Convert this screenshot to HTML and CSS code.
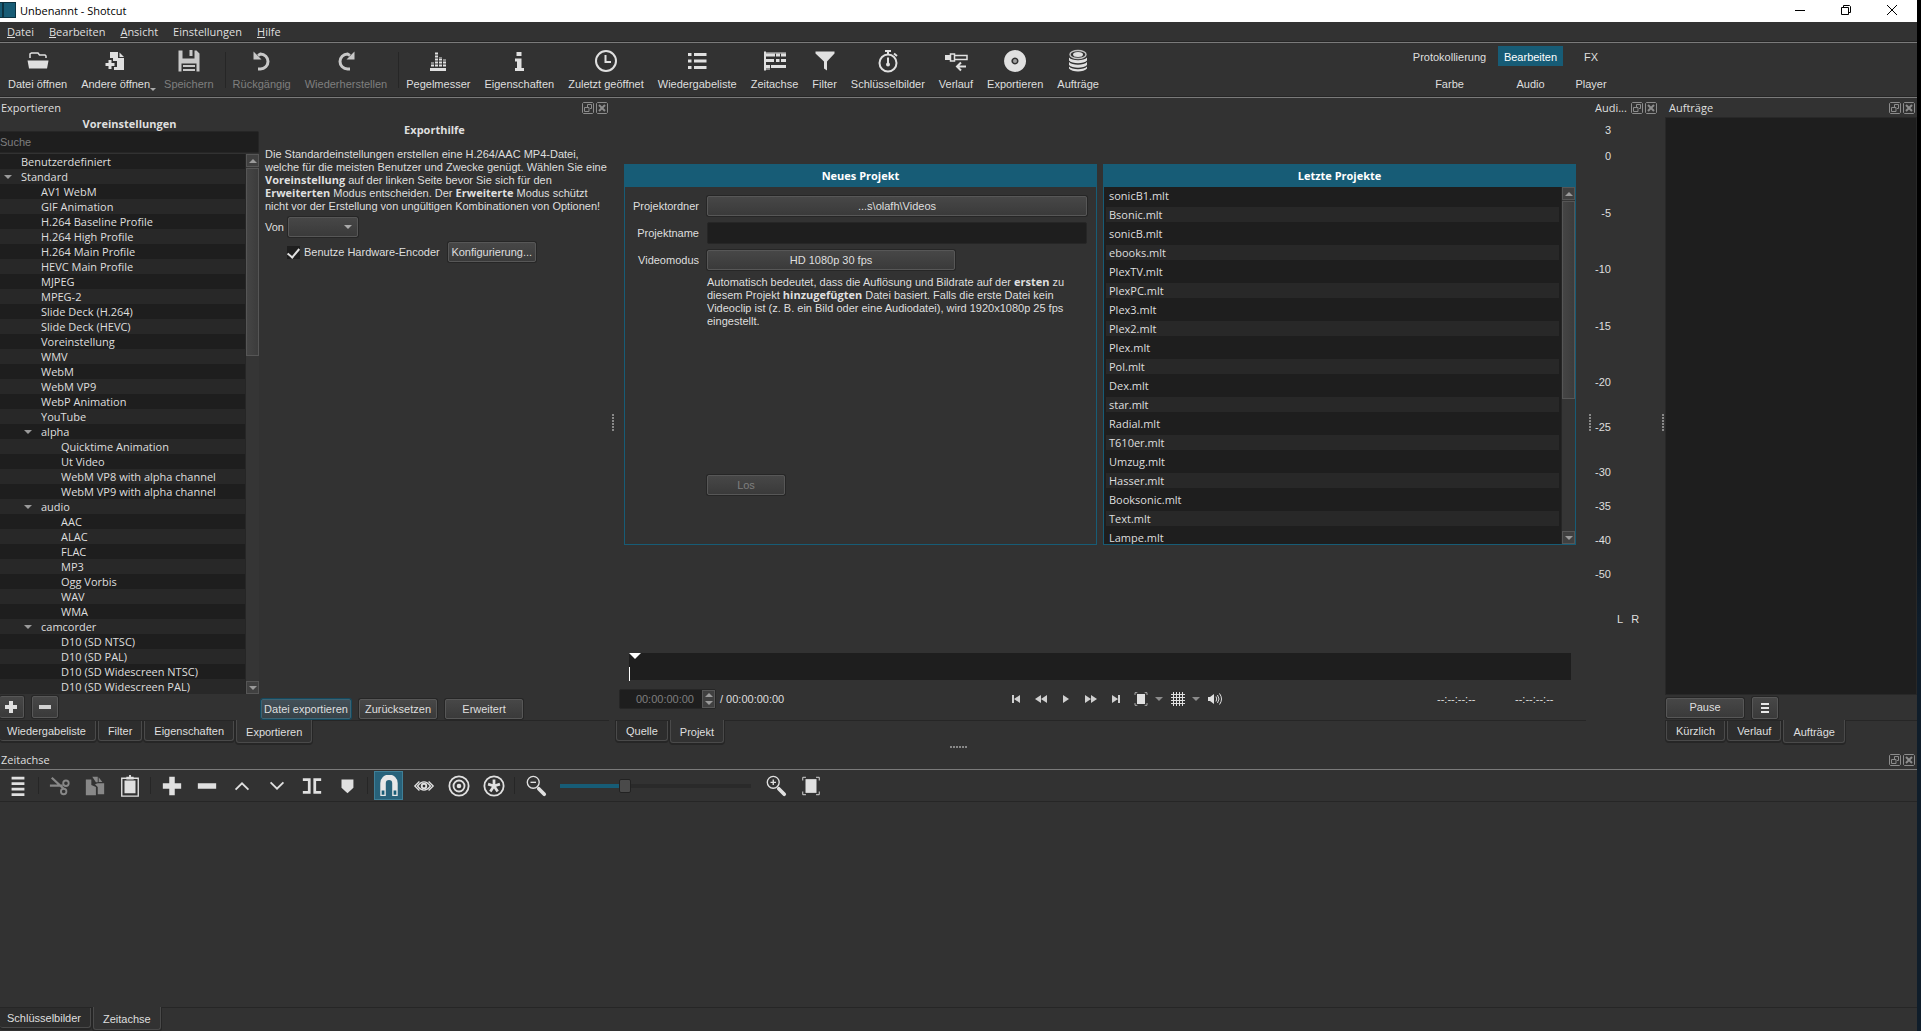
FILE: index.html
```html
<!DOCTYPE html>
<html lang="de">
<head>
  <meta charset="UTF-8" />
  <meta name="viewport" content="width=device-width, initial-scale=1.0"/>
  <title>Unbenannt - Shotcut</title>
  <link rel="stylesheet" href="styles.css">
</head>
<body>
  <!-- shared dock buttons -->
  <svg class="defs" width="0" height="0" aria-hidden="true">
    <symbol id="i-float" viewBox="0 0 12 12">
      <path d="M1.5 .5h9l1 1v9l-1 1h-9l-1-1v-9z M5.5 5V2.500h4v4H8 M2.500 5.500h4.500v4H2.500z" fill="none" stroke="#8c8c8c"/>
    </symbol>
    <symbol id="i-close" viewBox="0 0 12 12">
      <path d="M1.500 .5h9l1 1v9l-1 1h-9l-1-1v-9z" fill="none" stroke="#8c8c8c"/>
      <path d="M3 3l6 6M9 3l-6 6" stroke="#8c8c8c" stroke-width="2"/>
    </symbol>
    <symbol id="i-fit" viewBox="0 0 24 24">
      <path d="M6 4.500h12v15H6z" fill="#e0e0e0"/>
      <path d="M3 6V2.500h3.500M17.500 2.500H21V6M21 18v3.500h-3.500M6.500 21.500H3V18" fill="none" stroke="#e0e0e0"/>
    </symbol>
  </svg>

  <div class="window">
    <header class="titlebar">
      <svg class="logo" width="16" height="16" viewBox="0 0 16 16"><path d="M0 0h16v16H0z" fill="#0c3342"/><path d="M0 1h2v14H0zM4 1h11v14H4z" fill="#175c76"/></svg>
      <span class="title">Unbenannt - Shotcut</span>
      <div class="window-buttons">
        <button aria-label="Minimieren"><svg width="12" height="12" viewBox="0 0 12 12"><path d="M1 6.500h10" stroke="#000"/></svg></button>
        <button aria-label="Verkleinern"><svg width="12" height="12" viewBox="0 0 12 12"><path d="M1.500 3.500h7v7h-7zM3.500 3V1.500h6l1 1v6H9" fill="none" stroke="#000"/></svg></button>
        <button aria-label="Schließen"><svg width="12" height="12" viewBox="0 0 12 12"><path d="M1 1l10 10M11 1L1 11" stroke="#000"/></svg></button>
      </div>
    </header>

    <nav class="menubar">
      <a href="#datei"><u>D</u>atei</a>
      <a href="#bearbeiten"><u>B</u>earbeiten</a>
      <a href="#ansicht"><u>A</u>nsicht</a>
      <a href="#einstellungen">Einstellungen</a>
      <a href="#hilfe"><u>H</u>ilfe</a>
    </nav>

    <div class="toolbar">
      <button class="tool">
        <svg viewBox="0 0 24 24"><path d="M4 9V5l1.500-1H12l1.500 2H19l1 1v2" fill="none" stroke="#e0e0e0" stroke-width="1.500"/><path d="M1.500 11.500h21l-1.500 8H3z" fill="#e0e0e0"/></svg>
        Datei öffnen
      </button>
      <button class="tool has-menu">
        <svg viewBox="0 0 24 24"><path d="M6 3h8v6h6v12H10v-3h3v-6H9V9H6z" fill="#e0e0e0"/><path d="M15.500 3.500L20 8h-4.500z" fill="#e0e0e0"/><path d="M6 11v9M1.500 15.500h9" stroke="#e0e0e0" stroke-width="3"/></svg>
        Andere öffnen
      </button>
      <button class="tool" disabled>
        <svg viewBox="0 0 24 24"><path d="M1.500 1.500h4v8h12v-8h2l3 3v18h-3v-8h-15v8h-3z" fill="#c8c8c8"/><path d="M12.500 1h3v6h-3zM6 16h12v2H6zM6 20h12v2H6z" fill="#c8c8c8"/></svg>
        Speichern
      </button>
      <span class="sep"></span>
      <button class="tool" disabled>
        <svg viewBox="0 0 24 24"><path d="M8 20h2.500a7.500 7.500 0 0 0 0-15L8 6.500" fill="none" stroke="#c8c8c8" stroke-width="3"/><path d="M3.500 2.500v8h8z" fill="#c8c8c8"/></svg>
        Rückgängig
      </button>
      <button class="tool" disabled>
        <svg viewBox="0 0 24 24"><path d="M16 20h-2.500a7.500 7.500 0 0 1 0-15l2.500 1.500" fill="none" stroke="#c8c8c8" stroke-width="3"/><path d="M20.500 2.500v8h-8z" fill="#c8c8c8"/></svg>
        Wiederherstellen
      </button>
      <span class="sep"></span>
      <button class="tool">
        <svg viewBox="0 0 24 24"><path d="M4 19h16v3H4z" fill="#e0e0e0"/><path d="M6.500 17.500v-4M10.500 17.500V3M14.500 17.500V8M18.500 17.500v-7" stroke="#e0e0e0" stroke-width="3" stroke-dasharray="2 1"/></svg>
        Pegelmesser
      </button>
      <button class="tool">
        <svg viewBox="0 0 24 24"><path d="M9.500 3h5v4h-5zM8 9.500h6.500V19H17v3H8v-3h2v-6.500H8z" fill="#e0e0e0"/></svg>
        Eigenschaften
      </button>
      <button class="tool">
        <svg viewBox="0 0 24 24"><circle cx="12" cy="12" r="10" fill="none" stroke="#e0e0e0" stroke-width="2"/><path d="M11.500 6v7H17" fill="none" stroke="#e0e0e0" stroke-width="2"/></svg>
        Zuletzt geöffnet
      </button>
      <button class="tool">
        <svg viewBox="0 0 24 24"><path d="M3 5.500h3.500M9 5.500h12.500M3 12h3.500M9 12h12.500M3 18.500h3.500M9 18.500h12.500" stroke="#e0e0e0" stroke-width="3"/></svg>
        Wiedergabeliste
      </button>
      <button class="tool">
        <svg viewBox="0 0 24 24"><path d="M2 2.500v19" stroke="#e0e0e0" stroke-width="2"/><path d="M3 6h9M13 6h4M18 6h5M3 11.500h8M13 11.500h3.500M18 11.500h5M3 17.500h4M8 17.500h15" stroke="#e0e0e0" stroke-width="3"/><path d="M3 4h20M3 20h4" stroke="#e0e0e0"/></svg>
        Zeitachse
      </button>
      <button class="tool">
        <svg viewBox="0 0 24 24"><path d="M2.500 2.500h19v2l-7.500 8v9l-3-2v-7l-8.500-8z" fill="#e0e0e0"/></svg>
        Filter
      </button>
      <button class="tool">
        <svg viewBox="0 0 24 24"><circle cx="12" cy="14" r="8.500" fill="none" stroke="#e0e0e0" stroke-width="2"/><path d="M12 1v4M9 2h6M18 4.500l3 2.500" stroke="#e0e0e0" stroke-width="2"/><path d="M12 8.500v7" stroke="#e0e0e0" stroke-width="2"/><circle cx="12" cy="15.500" r="2" fill="#e0e0e0"/></svg>
        Schlüsselbilder
      </button>
      <button class="tool">
        <svg viewBox="0 0 24 24"><path d="M1 6h5v5H1z" fill="#e0e0e0"/><path d="M6.500 5h4v7h-4zM10.500 6.500H23v4H10.500z" fill="none" stroke="#e0e0e0" stroke-width="1.500"/><path d="M22 17.500h-8M17 13.500l-4 4 4 4" fill="none" stroke="#e0e0e0" stroke-width="2"/></svg>
        Verlauf
      </button>
      <button class="tool">
        <svg viewBox="0 0 24 24"><path d="M12 1a11 11 0 1 0 .1 0zM12 8.500a3.500 3.500 0 1 1-.1 0z" fill="#e0e0e0" fill-rule="evenodd"/><circle cx="12" cy="12" r="2" fill="#a0a0a0"/></svg>
        Exportieren
      </button>
      <button class="tool">
        <svg viewBox="0 0 24 24"><ellipse cx="12" cy="5.500" rx="8" ry="4" fill="none" stroke="#c0c0c0" stroke-width="1.500"/><ellipse cx="12" cy="5.500" rx="5" ry="2.500" fill="#e0e0e0"/><path d="M3 8.500c3 3.500 15 3.500 18 0v3c-3 3.500-15 3.500-18 0zM3 13c3 3.500 15 3.500 18 0v3c-3 3.500-15 3.500-18 0zM3 17.500c3 3.500 15 3.500 18 0v2c-3 4-15 4-18 0z" fill="#e0e0e0"/></svg>
        Aufträge
      </button>
      <div class="layouts">
        <button>Protokollierung</button>
        <button class="active">Bearbeiten</button>
        <button>FX</button>
        <button>Farbe</button>
        <button>Audio</button>
        <button>Player</button>
      </div>
    </div>

    <main class="docks">
      <section class="dock export-dock">
        <div class="dock-title">
          <span>Exportieren</span>
          <button aria-label="Abdocken"><svg><use href="#i-float"/></svg></button>
          <button aria-label="Schließen"><svg><use href="#i-close"/></svg></button>
        </div>
        <div class="export-body">
          <div class="presets">
            <h2>Voreinstellungen</h2>
            <input class="search" type="text" placeholder="Suche" aria-label="Suche">
            <div class="tree-wrap">
              <ul class="tree">
                <li>Benutzerdefiniert</li>
                <li class="open">Standard</li>
                <li class="l1">AV1 WebM</li>
                <li class="l1">GIF Animation</li>
                <li class="l1">H.264 Baseline Profile</li>
                <li class="l1">H.264 High Profile</li>
                <li class="l1">H.264 Main Profile</li>
                <li class="l1">HEVC Main Profile</li>
                <li class="l1">MJPEG</li>
                <li class="l1">MPEG-2</li>
                <li class="l1">Slide Deck (H.264)</li>
                <li class="l1">Slide Deck (HEVC)</li>
                <li class="l1">Voreinstellung</li>
                <li class="l1">WMV</li>
                <li class="l1">WebM</li>
                <li class="l1">WebM VP9</li>
                <li class="l1">WebP Animation</li>
                <li class="l1">YouTube</li>
                <li class="l1 open">alpha</li>
                <li class="l2">Quicktime Animation</li>
                <li class="l2">Ut Video</li>
                <li class="l2">WebM VP8 with alpha channel</li>
                <li class="l2">WebM VP9 with alpha channel</li>
                <li class="l1 open">audio</li>
                <li class="l2">AAC</li>
                <li class="l2">ALAC</li>
                <li class="l2">FLAC</li>
                <li class="l2">MP3</li>
                <li class="l2">Ogg Vorbis</li>
                <li class="l2">WAV</li>
                <li class="l2">WMA</li>
                <li class="l1 open">camcorder</li>
                <li class="l2">D10 (SD NTSC)</li>
                <li class="l2">D10 (SD PAL)</li>
                <li class="l2">D10 (SD Widescreen NTSC)</li>
                <li class="l2">D10 (SD Widescreen PAL)</li>
              </ul>
              <div class="scrollbar"><i class="up"></i><b></b><i class="down"></i></div>
            </div>
            <div class="preset-buttons">
              <button class="btn" aria-label="Hinzufügen"><svg width="12" height="12" viewBox="0 0 12 12"><path d="M6 0v12M0 6h12" stroke="#e0e0e0" stroke-width="4"/></svg></button>
              <button class="btn" aria-label="Entfernen"><svg width="12" height="12" viewBox="0 0 12 12"><path d="M0 6h12" stroke="#d0d0d0" stroke-width="4"/></svg></button>
            </div>
          </div>
          <div class="export-help">
            <h2>Exporthilfe</h2>
            <p>Die Standardeinstellungen erstellen eine H.264/AAC MP4-Datei,<br>
              welche für die meisten Benutzer und Zwecke genügt. Wählen Sie eine<br>
              <strong>Voreinstellung</strong> auf der linken Seite bevor Sie sich für den<br>
              <strong>Erweiterten</strong> Modus entscheiden. Der <strong>Erweiterte</strong> Modus schützt<br>
              nicht vor der Erstellung von ungültigen Kombinationen von Optionen!</p>
            <div class="from-row">
              <label for="from">Von</label>
              <span class="select-box"><select id="from"><option></option></select></span>
            </div>
            <div class="encoder-row">
              <input type="checkbox" id="hw" checked>
              <label for="hw">Benutze Hardware-Encoder</label>
              <button class="btn">Konfigurierung...</button>
            </div>
            <div class="export-buttons">
              <button class="btn primary">Datei exportieren</button>
              <button class="btn">Zurücksetzen</button>
              <button class="btn">Erweitert</button>
            </div>
          </div>
        </div>
        <div class="tabs flush">
          <button>Wiedergabeliste</button>
          <button>Filter</button>
          <button>Eigenschaften</button>
          <button class="active">Exportieren</button>
        </div>
      </section>

      <span class="splitter"></span>

      <section class="player">
        <div class="projects">
          <form class="card new-project">
            <h2>Neues Projekt</h2>
            <div class="form-grid">
              <label for="folder">Projektordner</label>
              <button type="button" class="btn" id="folder">...s\olafh\Videos</button>
              <label for="name">Projektname</label>
              <input type="text" id="name">
              <label for="mode">Videomodus</label>
              <button type="button" class="btn mode" id="mode">HD 1080p 30 fps</button>
              <p>Automatisch bedeutet, dass die Auflösung und Bildrate auf der <strong>ersten</strong> zu<br>
                diesem Projekt <strong>hinzugefügten</strong> Datei basiert. Falls die erste Datei kein<br>
                Videoclip ist (z. B. ein Bild oder eine Audiodatei), wird 1920x1080p 25 fps<br>
                eingestellt.</p>
              <button class="btn go" disabled>Los</button>
            </div>
          </form>
          <div class="card recent">
            <h2>Letzte Projekte</h2>
            <div class="recent-body">
              <ul>
                <li>sonicB1.mlt</li>
                <li>Bsonic.mlt</li>
                <li>sonicB.mlt</li>
                <li>ebooks.mlt</li>
                <li>PlexTV.mlt</li>
                <li>PlexPC.mlt</li>
                <li>Plex3.mlt</li>
                <li>Plex2.mlt</li>
                <li>Plex.mlt</li>
                <li>Pol.mlt</li>
                <li>Dex.mlt</li>
                <li>star.mlt</li>
                <li>Radial.mlt</li>
                <li>T610er.mlt</li>
                <li>Umzug.mlt</li>
                <li>Hasser.mlt</li>
                <li>Booksonic.mlt</li>
                <li>Text.mlt</li>
                <li>Lampe.mlt</li>
              </ul>
              <div class="scrollbar"><i class="up"></i><b></b><i class="down"></i></div>
            </div>
          </div>
        </div>

        <div class="scrub">
          <svg width="13" height="28" viewBox="0 0 13 28"><path d="M0 0h12L6 6z" fill="#fff"/><path d="M.5 14v14" stroke="#fff"/></svg>
        </div>

        <div class="controls">
          <div class="spinbox">
            <input type="text" value="00:00:00:00" aria-label="Position" disabled>
            <span><i class="up"></i><i class="down"></i></span>
          </div>
          <span class="duration">/ 00:00:00:00</span>
          <div class="transport">
            <button aria-label="Zum Anfang"><svg width="16" height="16" viewBox="0 0 16 16"><path d="M4 4h2v8H4zM12 4v8L6 8z" fill="#d0d0d0"/></svg></button>
            <button aria-label="Zurückspulen"><svg width="16" height="16" viewBox="0 0 16 16"><path d="M8 4v8L2 8zM14 4v8L8 8z" fill="#d0d0d0"/></svg></button>
            <button aria-label="Abspielen"><svg width="16" height="16" viewBox="0 0 16 16"><path d="M5 4v8l6-4z" fill="#d0d0d0"/></svg></button>
            <button aria-label="Vorspulen"><svg width="16" height="16" viewBox="0 0 16 16"><path d="M2 4v8l6-4zM8 4v8l6-4z" fill="#d0d0d0"/></svg></button>
            <button aria-label="Zum Ende"><svg width="16" height="16" viewBox="0 0 16 16"><path d="M4 4v8l6-4zM10 4h2v8h-2z" fill="#d0d0d0"/></svg></button>
            <button class="menu-arrow" aria-label="Zoom"><svg width="16" height="16"><use href="#i-fit"/></svg></button>
            <button class="menu-arrow" aria-label="Raster"><svg width="16" height="16" viewBox="0 0 16 16"><path d="M1 3.500h14M1 6.500h14M1 9.500h14M1 12.500h14M3.500 1v14M6.500 1v14M9.500 1v14M12.500 1v14" stroke="#e0e0e0"/></svg></button>
            <button aria-label="Lautstärke"><svg width="16" height="16" viewBox="0 0 16 16"><path d="M1 6h2v4H1zM3 6l4-3v10l-4-3z" fill="#e0e0e0"/><path d="M9 5.500q1.500 2.500 0 5M10.500 4q3 4 0 8M12.500 2.500q4 5.500 0 11" fill="none" stroke="#e0e0e0"/></svg></button>
          </div>
          <span class="timecode">--:--:--:--</span>
          <span class="timecode">--:--:--:--</span>
        </div>
        <div class="tabs">
          <button>Quelle</button>
          <button class="active">Projekt</button>
        </div>
      </section>

      <span class="splitter"></span>

      <section class="dock audio-dock">
        <div class="dock-title">
          <span>Audi...</span>
          <button aria-label="Abdocken"><svg><use href="#i-float"/></svg></button>
          <button aria-label="Schließen"><svg><use href="#i-close"/></svg></button>
        </div>
        <ol class="scale">
          <li class="first">3</li>
          <li>0</li>
          <li>-5</li>
          <li>-10</li>
          <li>-15</li>
          <li class="mid">-20</li>
          <li class="mid">-25</li>
          <li class="low">-30</li>
          <li class="low">-35</li>
          <li class="low">-40</li>
          <li class="mid">-50</li>
        </ol>
        <div class="channels"><span>L</span><span>R</span></div>
      </section>

      <span class="splitter"></span>

      <section class="dock jobs-dock">
        <div class="dock-title">
          <span>Aufträge</span>
          <button aria-label="Abdocken"><svg><use href="#i-float"/></svg></button>
          <button aria-label="Schließen"><svg><use href="#i-close"/></svg></button>
        </div>
        <div class="jobs"></div>
        <div class="job-buttons">
          <button class="btn">Pause</button>
          <button class="btn square" aria-label="Menü"><svg width="8" height="10" viewBox="0 0 8 10"><path d="M0 1h8M0 5h8M0 9h8" stroke="#e8e8e8" stroke-width="2"/></svg></button>
        </div>
        <div class="tabs">
          <button>Kürzlich</button>
          <button>Verlauf</button>
          <button class="active">Aufträge</button>
        </div>
      </section>
    </main>

    <span class="splitter horizontal"></span>

    <section class="timeline">
      <div class="dock-title">
        <span>Zeitachse</span>
        <button aria-label="Abdocken"><svg><use href="#i-float"/></svg></button>
        <button aria-label="Schließen"><svg><use href="#i-close"/></svg></button>
      </div>
      <div class="timeline-tools">
        <button aria-label="Menü"><svg viewBox="0 0 24 24"><path d="M5 3.500h14M5 9.500h14M5 15.500h14M5 21.500h14" stroke="#e0e0e0" stroke-width="3"/></svg></button>
        <span class="sep"></span>
        <button aria-label="Ausschneiden" disabled><svg viewBox="0 0 24 24"><path d="M3 3l13 12M1 11.500h14" stroke="#888" stroke-width="2.500"/><circle cx="18.500" cy="9" r="3" fill="none" stroke="#888" stroke-width="2"/><circle cx="16" cy="18" r="3" fill="none" stroke="#888" stroke-width="2"/></svg></button>
        <button aria-label="Kopieren" disabled><svg viewBox="0 0 24 24"><path d="M2 5h6v6l5 2v9H2zM9 2h6v6h-2zM15 9h7v12h-7v-8l-3-3z" fill="#888"/><path d="M16 2.500l4 5h-4z" fill="#888"/></svg></button>
        <button aria-label="Einfügen"><svg viewBox="0 0 24 24"><path d="M3 3.500h18v19.500H3z" fill="none" stroke="#e0e0e0" stroke-width="1.500"/><path d="M6 6h12v14H6zM8 2h8v3H8zM11 0h2v2h-2z" fill="#e0e0e0"/></svg></button>
        <span class="sep"></span>
        <button aria-label="Anhängen"><svg viewBox="0 0 24 24"><path d="M12 2v20M2 12h20" stroke="#e0e0e0" stroke-width="6"/></svg></button>
        <button aria-label="Entfernen"><svg viewBox="0 0 24 24"><path d="M2 12h20" stroke="#e0e0e0" stroke-width="6"/></svg></button>
        <button aria-label="Anheben"><svg viewBox="0 0 24 24"><path d="M5 16l7-7 7 7" fill="none" stroke="#e0e0e0" stroke-width="2"/></svg></button>
        <button aria-label="Überschreiben"><svg viewBox="0 0 24 24"><path d="M5 8l7 7 7-7" fill="none" stroke="#e0e0e0" stroke-width="2"/></svg></button>
        <button aria-label="Teilen"><svg viewBox="0 0 24 24"><path d="M2 5h7v14H2M22 5h-7v14h7" fill="none" stroke="#e0e0e0" stroke-width="3"/></svg></button>
        <button aria-label="Marker"><svg viewBox="0 0 24 24"><path d="M6 5h13v9l-6.500 6L6 14z" fill="#e0e0e0"/></svg></button>
        <span class="sep"></span>
        <button class="active" aria-label="Einrasten"><svg viewBox="0 0 24 24"><path d="M5.500 23V9a6.500 6.500 0 0 1 13 0v14" fill="none" stroke="#e8e8e8" stroke-width="6"/><path d="M4 17h3v4.500H4zM17 17h3v4.500h-3z" fill="#175c76"/></svg></button>
        <button aria-label="Scrubbing"><svg viewBox="0 0 24 24"><path d="M7 7l-5 5 5 5M17 7l5 5-5 5" fill="none" stroke="#e0e0e0" stroke-width="1.500"/><path d="M5 12q7-9 14 0-7 9-14 0z" fill="none" stroke="#e0e0e0" stroke-width="1.500"/><circle cx="12" cy="12" r="2.500" fill="none" stroke="#e0e0e0" stroke-width="2"/></svg></button>
        <button aria-label="Ripple"><svg viewBox="0 0 24 24"><g fill="none" stroke="#e0e0e0" stroke-width="2"><circle cx="12" cy="12" r="10.500"/><circle cx="12" cy="12" r="6"/></g><circle cx="12" cy="12" r="2.500" fill="#e0e0e0"/></svg></button>
        <button aria-label="Ripple alle Spuren"><svg viewBox="0 0 24 24"><circle cx="12" cy="12" r="10.500" fill="none" stroke="#e0e0e0" stroke-width="2"/><path d="M12 5v7M5.500 10l6.500 2M18.500 10L12 12M8 18l4-6M16 18l-4-6" stroke="#e0e0e0" stroke-width="3"/></svg></button>
        <span class="sep"></span>
        <button aria-label="Verkleinern"><svg viewBox="0 0 24 24"><circle cx="9" cy="8" r="6.500" fill="none" stroke="#e0e0e0" stroke-width="1.500"/><path d="M6 8h6" stroke="#e0e0e0" stroke-width="1.500"/><path d="M15 15l6 6" stroke="#e0e0e0" stroke-width="4" stroke-linecap="round"/></svg></button>
        <input type="range" min="0" max="100" value="33" aria-label="Zoom">
        <button aria-label="Vergrößern"><svg viewBox="0 0 24 24"><circle cx="9" cy="8" r="6.500" fill="none" stroke="#e0e0e0" stroke-width="1.500"/><path d="M6 8h6M9 5v6" stroke="#e0e0e0" stroke-width="1.500"/><path d="M15 15l6 6" stroke="#e0e0e0" stroke-width="4" stroke-linecap="round"/></svg></button>
        <button aria-label="Einpassen"><svg><use href="#i-fit"/></svg></button>
      </div>
      <div class="tracks"></div>
      <div class="tabs flush">
        <button>Schlüsselbilder</button>
        <button class="active">Zeitachse</button>
      </div>
    </section>
  </div>
</body>
</html>
```
FILE: styles.css
```css
:root {
  --bg: #323232;
  --base: #1e1e1e;
  --alt: #282828;
  --accent: #175c76;
  --text: #dfdfdf;
  --muted: #7f7f7f;
  --shadow: #262626;
  --line: #7a7a7a;
  --list-font: "Open Sans", "Noto Sans", sans-serif;
}
* {
  box-sizing: border-box;
}
body {
  margin: 0;
  padding-right: 4px;
  background: linear-gradient(#000 40%, #0f1d2a 60%);
  color: var(--text);
  font-family: "Liberation Sans", Arial, sans-serif;
  font-size: 11px;
  line-height: 13px;
}
button, input, select {
  font: inherit;
  color: inherit;
  margin: 0;
}
button {
  background: none;
  border: none;
  padding: 0;
}
h2, p, ul, ol {
  margin: 0;
  padding: 0;
  list-style: none;
}
h2, strong {
  font-family: var(--list-font);
  font-size: 11px;
  font-weight: 700;
}
strong {
  line-height: 0;
}
svg {
  display: block;
}
.defs {
  position: absolute;
}
.window {
  display: flex;
  flex-direction: column;
  min-height: 100vh;
  background: var(--bg);
}

/* title and menu */
.titlebar {
  display: flex;
  align-items: center;
  height: 22px;
  padding: 0 2px 2px 0;
  background: #fff;
  color: #000;
  font-family: var(--list-font);
}
.title {
  margin-left: 4px;
}
.window-buttons {
  display: flex;
  margin-left: auto;
}
.window-buttons button {
  width: 46px;
  display: flex;
  justify-content: center;
}
.menubar {
  display: flex;
  gap: 15px;
  height: 21px;
  padding: 2px 7px;
  border-bottom: 1px solid var(--line);
  box-shadow: inset 0 -1px var(--shadow);
  font-family: var(--list-font);
  line-height: 16px;
}
.menubar a {
  color: inherit;
  text-decoration: none;
}

/* main toolbar */
.toolbar {
  display: flex;
  align-items: flex-start;
  height: 55px;
  padding-left: 1px;
  border-bottom: 1px solid var(--line);
  box-shadow: inset 0 -1px var(--shadow);
}
.tool {
  display: flex;
  flex-direction: column;
  align-items: center;
  gap: 5px;
  padding: 6px 7px 0;
  white-space: nowrap;
}
.tool svg {
  width: 24px;
  height: 24px;
}
.tool:disabled {
  color: var(--muted);
}
.has-menu {
  position: relative;
}
.has-menu::after {
  content: "";
  position: absolute;
  right: 1px;
  bottom: 0;
  border: 3px solid transparent;
  border-top-color: #aaa;
  border-bottom: none;
}
.toolbar .sep {
  width: 1px;
  height: 36px;
  margin: 9px 0 0 4px;
  background: var(--shadow);
}
.layouts {
  display: grid;
  grid-template-columns: 85px 65px 44px;
  grid-auto-rows: 20px;
  gap: 7px 6px;
  margin: 3px 304px 0 auto;
}
.layouts button {
  padding-top: 2px;
}
.layouts .active {
  background: var(--accent);
  color: #fff;
}

/* docks */
.docks {
  display: flex;
}
.dock {
  display: flex;
  flex-direction: column;
}
.dock-title {
  display: flex;
  align-items: center;
  gap: 2px;
  height: 19px;
  padding: 0 2px 0 1px;
  font-family: var(--list-font);
}
.dock-title span {
  flex: 1;
}
.dock-title svg {
  width: 12px;
  height: 12px;
}
.splitter {
  align-self: center;
  width: 2px;
  height: 17px;
  margin: 4px 1px 0 3px;
  background: repeating-linear-gradient(#888 0 2px, transparent 2px 3px);
}
.splitter.horizontal {
  width: 17px;
  height: 2px;
  margin: 4px 0 2px;
  background: repeating-linear-gradient(90deg, #888 0 2px, transparent 2px 3px);
}
.btn {
  display: flex;
  align-items: center;
  justify-content: center;
  height: 20px;
  border: 1px solid #575757;
  border-radius: 2px;
  background: linear-gradient(#474747, #3a3a3a);
  box-shadow: 0 0 0 1px var(--shadow);
  white-space: nowrap;
}
.btn:disabled {
  color: var(--muted);
}
.btn.primary {
  border-color: #3c6373;
  background: linear-gradient(#435058, #374248);
  box-shadow: 0 0 0 1px #14495e;
}
.tabs {
  display: flex;
  align-items: flex-start;
  gap: 2px;
  height: 22px;
  padding-left: 1px;
  border-top: 1px solid var(--shadow);
}
.tabs button {
  height: 20px;
  padding: 2px 9px 0;
  border: 1px solid #4a4a4a;
  border-top: none;
  border-radius: 0 0 3px 3px;
  background: #2d2d2d;
  box-shadow: 0 1px 0 1px var(--shadow);
}
.tabs .active {
  height: 23px;
  margin-top: -1px;
  background: var(--bg);
}
.tabs.flush {
  padding-left: 0;
}
.flush button:first-child {
  padding-left: 7px;
  border-left: none;
}

.scrollbar {
  display: flex;
  flex-direction: column;
  width: 14px;
  gap: 1px;
  background: #353535;
  border-left: 1px solid var(--shadow);
}
.scrollbar i {
  display: flex;
  align-items: center;
  justify-content: center;
  height: 13px;
  border: 1px solid #565656;
  background: #404040;
}
.scrollbar b {
  height: 188px;
  border: 1px solid #565656;
  background: linear-gradient(90deg, #454545, #3c3c3c);
}
.scrollbar .down {
  margin-top: auto;
}
.up::before, .down::before {
  content: "";
  border: 4px solid transparent;
  border-top: none;
  border-bottom-color: #9a9a9a;
}
.down::before {
  border-top: 4px solid #9a9a9a;
  border-bottom: none;
}

/* export dock */
.export-dock {
  width: 609px;
}
.export-dock .dock-title {
  padding-right: 1px;
}
.export-body {
  display: flex;
  flex: 1;
}
.presets {
  flex: none;
  width: 259px;
}
.presets h2 {
  height: 14px;
  line-height: 14px;
  text-align: center;
}
.search {
  display: block;
  width: 100%;
  height: 22px;
  margin-bottom: 1px;
  padding: 0;
  border: 1px solid var(--shadow);
  border-left: none;
  border-radius: 0 2px 2px 0;
  background: var(--base);
}
.search::placeholder {
  color: var(--muted);
}
.tree-wrap {
  display: flex;
}
.tree {
  flex: 1;
  font-family: var(--list-font);
  line-height: 15px;
}
.tree li {
  display: flex;
  align-items: center;
  height: 15px;
  padding-left: 21px;
  background: var(--base);
}
.tree li:nth-child(even) {
  background: var(--alt);
}
.tree .l1 {
  padding-left: 41px;
}
.tree .l2 {
  padding-left: 61px;
}
.tree .open::before {
  content: "";
  margin: 0 9px 0 -17px;
  border: 4px solid transparent;
  border-top-color: #9a9a9a;
  border-bottom: none;
}
.preset-buttons {
  display: flex;
  gap: 8px;
  padding: 2px 0;
}
.preset-buttons .btn {
  width: 26px;
  height: 22px;
}
.preset-buttons .btn:first-child {
  width: 24px;
  padding-right: 2px;
  border-left: none;
}
.export-help {
  display: flex;
  flex-direction: column;
  flex: 1;
  min-width: 0;
  padding: 6px 5px 0 6px;
}
.export-help h2 {
  text-align: center;
  margin-bottom: 12px;
}
.export-help p {
  white-space: nowrap;
}
.from-row {
  display: flex;
  align-items: center;
  gap: 4px;
  margin-top: 4px;
}
.select-box {
  position: relative;
}
.select-box select {
  display: block;
  appearance: none;
  width: 70px;
  height: 20px;
  border: 1px solid #575757;
  border-radius: 2px;
  background: linear-gradient(#474747, #3a3a3a);
  box-shadow: 0 0 0 1px var(--shadow);
}
.select-box::after {
  content: "";
  position: absolute;
  top: 8px;
  right: 6px;
  border: 4px solid transparent;
  border-top-color: #aaa;
  border-bottom: none;
}
.encoder-row {
  display: flex;
  align-items: center;
  gap: 4px;
  margin: 5px 0 0 22px;
}
.encoder-row input {
  appearance: none;
  display: flex;
  justify-content: center;
  width: 13px;
  height: 13px;
  background: var(--base);
}
.encoder-row input:checked::after {
  content: "";
  width: 5px;
  height: 10px;
  border: solid #e0e0e0;
  border-width: 0 2px 2px 0;
  transform: rotate(40deg);
}
.encoder-row .btn {
  width: 88px;
  margin-left: 4px;
}
.export-buttons {
  display: flex;
  gap: 8px;
  margin: auto 0 1px -4px;
}
.export-buttons .btn {
  width: 78px;
}
.export-buttons .primary {
  width: 90px;
}

/* player */
.player {
  display: flex;
  flex-direction: column;
  flex: 1;
}
.projects {
  display: grid;
  grid-template-columns: 1fr 1fr;
  gap: 6px;
  height: 381px;
  margin: 66px 10px 0 9px;
}
.card {
  display: flex;
  flex-direction: column;
  min-height: 0;
  border: 1px solid var(--accent);
}
.card h2 {
  height: 22px;
  line-height: 22px;
  background: var(--accent);
  color: #fff;
  text-align: center;
}
.form-grid {
  display: grid;
  grid-template-columns: 67px 1fr;
  grid-template-rows: 20px 22px 20px 1fr 20px;
  align-items: center;
  gap: 6px 8px;
  flex: 1;
  padding: 9px 9px 49px 7px;
}
.form-grid label {
  text-align: right;
}
.form-grid input {
  height: 22px;
  border: 1px solid var(--shadow);
  border-radius: 2px;
  background: var(--base);
}
.form-grid .mode {
  width: 248px;
}
.form-grid p, .form-grid .go {
  grid-column: 2;
}
.form-grid p {
  align-self: start;
  white-space: nowrap;
}
.form-grid .go {
  width: 78px;
}
.recent-body {
  display: flex;
  flex: 1;
  min-height: 0;
  background: var(--base);
}
.recent ul {
  display: flex;
  flex-direction: column;
  gap: 4px;
  flex: 1;
  padding: 1px 2px;
  overflow: hidden;
  font-family: var(--list-font);
}
.recent li {
  flex: none;
  height: 15px;
  line-height: 15px;
  padding-left: 3px;
}
.recent li:nth-child(even) {
  background: var(--alt);
}
.recent .scrollbar b {
  height: 198px;
}
.scrub {
  height: 27px;
  margin: auto 15px 0 14px;
  background: var(--base);
}
.controls {
  display: grid;
  grid-template-columns: auto auto 1fr auto auto;
  align-items: center;
  margin: 8px 27px 10px 4px;
  height: 22px;
}
.spinbox {
  display: flex;
  width: 97px;
  height: 20px;
  border: 1px solid var(--shadow);
  border-radius: 2px;
  background: var(--base);
}
.spinbox input {
  flex: 1;
  min-width: 0;
  padding: 0 8px;
  border: none;
  background: none;
  color: var(--muted);
  text-align: right;
}
.spinbox span {
  display: flex;
  flex-direction: column;
  align-items: center;
  justify-content: space-around;
  width: 13px;
  border: 1px solid #575757;
  background: #404040;
}
.spinbox i {
  display: flex;
}
.duration {
  margin: 0 44px 0 4px;
}
.transport {
  display: flex;
  gap: 9px;
  justify-content: center;
}
.menu-arrow {
  display: flex;
  align-items: center;
  gap: 6px;
}
.menu-arrow + button {
  margin-left: -2px;
}
.menu-arrow::after {
  content: "";
  border: 4px solid transparent;
  border-top-color: #8c8c8c;
  border-bottom: none;
}
.timecode {
  width: 44px;
  margin-left: 34px;
}

/* audio meter */
.audio-dock {
  width: 67px;
}
.audio-dock .dock-title {
  padding-left: 3px;
}
.scale {
  width: 19px;
  padding-top: 7px;
  text-align: right;
}
.scale li {
  height: 57px;
}
.scale li:nth-child(odd) {
  height: 56px;
}
.scale li.first {
  height: 26px;
}
.scale li.mid {
  height: 45px;
}
.scale li.low {
  height: 34px;
}
.channels {
  display: flex;
  gap: 8px;
  padding-left: 25px;
}

/* jobs */
.jobs-dock {
  width: 252px;
}
.jobs-dock .dock-title {
  padding-left: 4px;
}
.jobs {
  flex: 1;
  background: var(--base);
  border: 1px solid var(--alt);
}
.job-buttons {
  display: flex;
  align-items: center;
  gap: 8px;
  height: 25px;
  padding-left: 1px;
}
.job-buttons .btn {
  width: 78px;
}
.job-buttons .square {
  width: 26px;
  height: 22px;
}

/* timeline */
.timeline {
  display: flex;
  flex-direction: column;
  flex: 1;
}
.timeline-tools {
  display: flex;
  align-items: center;
  gap: 6px;
  height: 33px;
  padding-left: 3px;
  border-top: 1px solid var(--line);
  border-bottom: 1px solid var(--shadow);
}
.timeline-tools button {
  display: flex;
  align-items: center;
  justify-content: center;
  width: 29px;
  height: 29px;
}
.timeline-tools svg {
  width: 22px;
  height: 22px;
}
.timeline-tools .active {
  border: 1px solid #3f7f97;
  background: #28627a;
}
.timeline-tools .sep {
  width: 1px;
  height: 17px;
  background: var(--shadow);
}
.timeline-tools input {
  appearance: none;
  width: 191px;
  height: 14px;
  margin: 0 4px;
  background: linear-gradient(90deg, var(--accent) 62px, #2a2a2a 62px) center / 100% 4px no-repeat;
}
.timeline-tools input::-webkit-slider-thumb {
  appearance: none;
  width: 12px;
  height: 14px;
  border: 1px solid #222;
  border-radius: 2px;
  background: #4a4a4a;
}
.tracks {
  flex: 1;
}
.timeline .tabs {
  height: 24px;
}
```
